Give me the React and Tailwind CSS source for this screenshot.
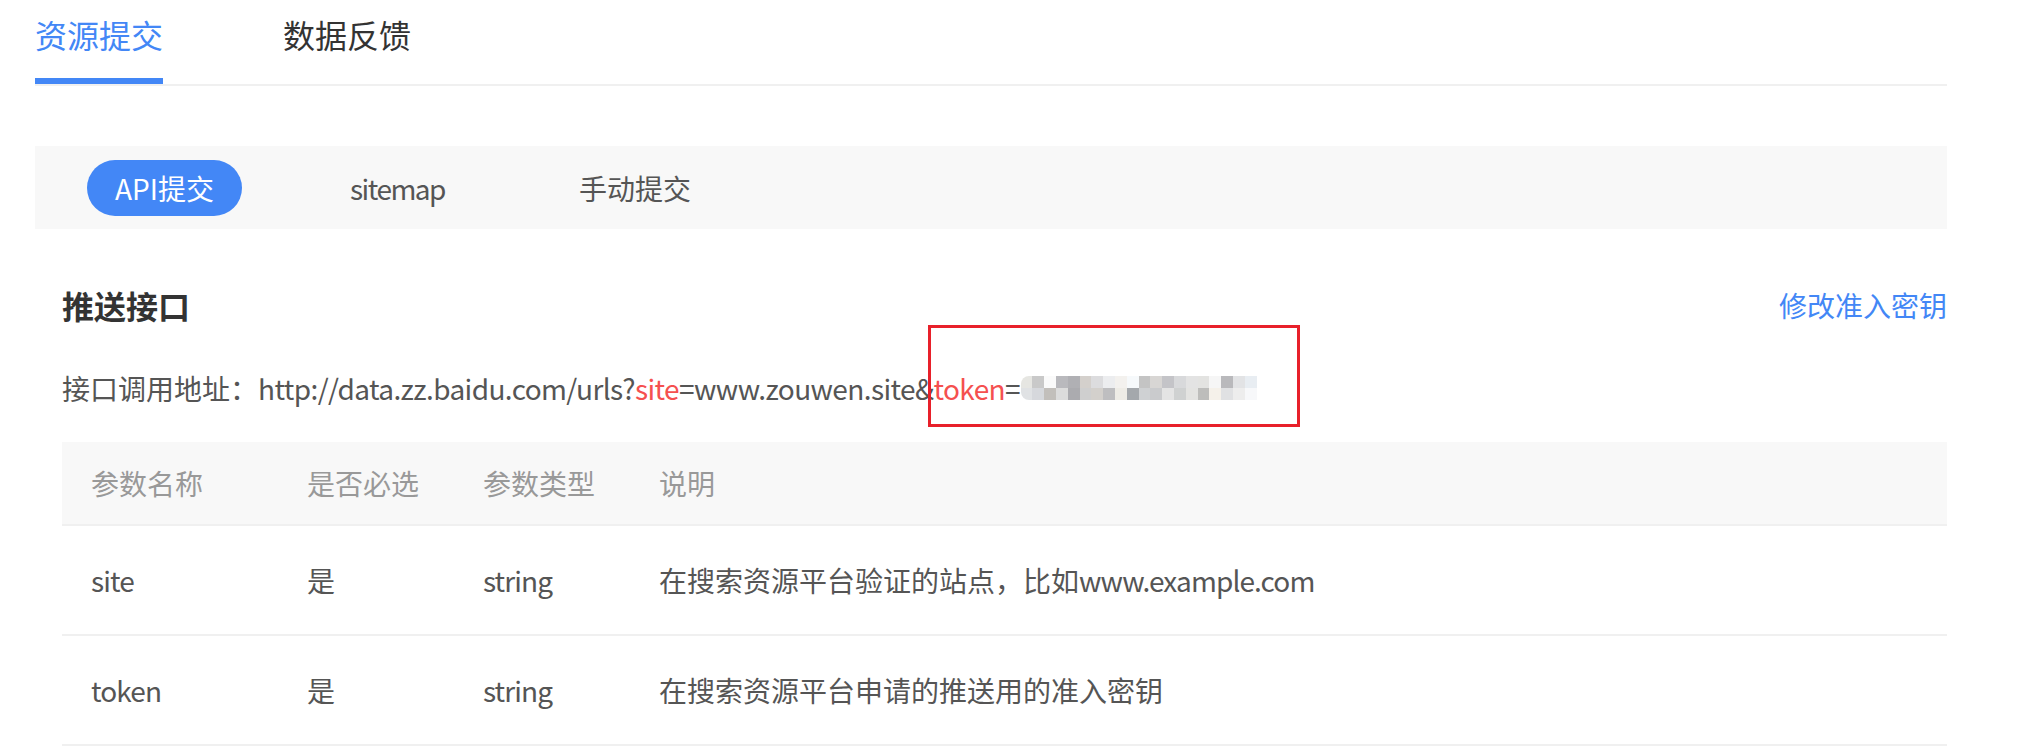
import React from "react";

const row1 = ["#e6e6e2","#c9c9c9","#fafafa","#b9b9bd","#b0b0b4","#d4d0cc","#dcdcde","#ecedef","#f3f1ee","#f6f9fb","#c4c4c4","#d8d6d4","#c4c4c8","#d8d9db","#e3e3e3","#e3e3e1","#f6f6f6","#b9b9bc","#e2e3e5","#e8edf2"];
const row2 = ["#e0e2e4","#d6d8dc","#c2bfbb","#dcdcdc","#ababaf","#cfcfcf","#d3d0cc","#bebec0","#eeece6","#a4a8ac","#cfd1d3","#cacbcd","#e4e4e4","#cfd1d1","#e3e3e1","#bdbdbb","#f5f1ea","#e0e1e3","#ededed","#f7f8fa"];

function Mosaic() {
  return (
    <span className="inline-flex flex-col align-middle overflow-hidden rounded-l-[8px]">
      {[row1, row2].map((r, i) => (
        <span key={i} className="flex">
          {r.map((c, j) => (
            <span key={j} className="block w-[11.8px] h-[12px]" style={{ background: c }} />
          ))}
        </span>
      ))}
    </span>
  );
}

const rows = [
  ["site", "是", "string", ["在搜索资源平台验证的站点，比如", "www.example.com"]],
  ["token", "是", "string", ["在搜索资源平台申请的推送用的准入密钥", ""]],
];

export default function App() {
  return (
    <div className="w-[2042px] h-[746px] overflow-hidden bg-white font-['Noto_Sans_CJK_SC','Noto_Sans',sans-serif]">
      <div className="ml-[35px] w-[1912px]">
        {/* Top tabs */}
        <div className="flex gap-[120px] border-b-2 border-[#f0f0f0]">
          <div className="flex flex-col">
            <div className="pt-[18px] text-[32px] leading-[32px] text-[#4387f6]">资源提交</div>
            <div className="mt-[28px] h-[6px] bg-[#4387f6]" />
          </div>
          <div className="flex flex-col">
            <div className="pt-[18px] text-[32px] leading-[32px] text-[#333]">数据反馈</div>
            <div className="mt-[28px] h-[6px]" />
          </div>
        </div>

        {/* Sub tabs */}
        <div className="mt-[60px] h-[83px] bg-[#f8f8f8] flex items-center pl-[52px] gap-[80px] text-[28px]">
          <div className="h-[56px] px-[28px] rounded-full bg-[#4387f6] text-white flex items-center leading-none">API提交</div>
          <div className="px-[28px] text-[#555] leading-none tracking-[-1.5px]">sitemap</div>
          <div className="-ml-[2px] px-[28px] text-[#555] leading-none">手动提交</div>
        </div>

        {/* Section */}
        <div className="pl-[27px]">
          <div className="mt-[60px] flex items-center justify-between">
            <div className="text-[32px] leading-[32px] font-bold text-[#333]">推送接口</div>
            <div className="text-[28px] leading-[32px] text-[#4387f6]">修改准入密钥</div>
          </div>

          <div className="mt-[53px] text-[28px] leading-[28px] text-[#555] whitespace-nowrap flex items-center">
            <span>接口调用地址：</span>
            <span className="tracking-[-0.6px]">http://data.zz.baidu.com/urls?</span>
            <span className="text-[#f5504f] tracking-[-0.6px]">site</span>
            <span className="tracking-[-0.6px]">=www.zouwen.site&amp;</span>
            <span className="relative flex items-center">
              <span className="text-[#f5504f] tracking-[-0.6px]">token</span>
              <span>=</span>
              <Mosaic />
              <span className="absolute -left-[5px] -top-[49px] w-[372px] h-[102px] border-[3px] border-[#e8202a]" />
            </span>
          </div>

          {/* Table */}
          <div className="mt-[40px] text-[28px]">
            <div className="grid grid-cols-[216px_176px_176px_1fr] h-[84px] items-center bg-[#f8f8f8] border-b-2 border-[#f0f0f0] text-[#999]">
              <div className="pl-[29px]">参数名称</div>
              <div className="pl-[29px]">是否必选</div>
              <div className="pl-[29px]">参数类型</div>
              <div className="pl-[29px]">说明</div>
            </div>
            {rows.map((r, i) => (
              <div key={i} className="grid grid-cols-[216px_176px_176px_1fr] h-[110px] items-center border-b-2 border-[#f0f0f0] text-[#555]">
                <div className="pl-[29px] tracking-[-0.9px]">{r[0]}</div>
                <div className="pl-[29px]">{r[1]}</div>
                <div className="pl-[29px] tracking-[-0.9px]">{r[2]}</div>
                <div className="pl-[29px]">
                  {r[3][0]}
                  <span className="tracking-[-0.9px]">{r[3][1]}</span>
                </div>
              </div>
            ))}
          </div>
        </div>
      </div>
    </div>
  );
}
